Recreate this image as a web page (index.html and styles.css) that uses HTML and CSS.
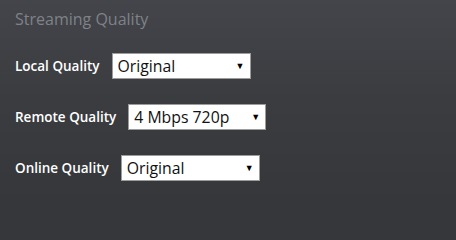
FILE: index.html
```html
<!DOCTYPE html>
<html>
<head>
<meta charset="utf-8">
<link rel="stylesheet" href="styles.css">
</head>
<body>
<div class="panel">
  <h2 class="title">Streaming Quality</h2>
  <div class="row">
    <label class="label">Local Quality</label>
    <span class="select-wrap w139">
      <select class="select"><option>Original</option></select>
      <span class="arrow">▼</span>
    </span>
  </div>
  <div class="row">
    <label class="label">Remote Quality</label>
    <span class="select-wrap w138">
      <select class="select"><option>4 Mbps 720p</option></select>
      <span class="arrow">▼</span>
    </span>
  </div>
  <div class="row">
    <label class="label">Online Quality</label>
    <span class="select-wrap w139">
      <select class="select"><option>Original</option></select>
      <span class="arrow">▼</span>
    </span>
  </div>
</div>
</body>
</html>
```
FILE: styles.css
```css
html {
  background-color: #36373a;
  background-image: linear-gradient(180deg, #43454a 0px, #3b3c40 100px, #36373a 200px);
  background-repeat: no-repeat;
  min-height: 100%;
}
body {
  margin: 0;
  padding: 0;
  font-family: "Open Sans", sans-serif;
}
.panel {
  padding: 6px 15px 0 15px;
}
.title {
  margin: 0 0 21px 0;
  font-size: 16px;
  font-weight: 400;
  color: #7f8287;
  line-height: 26px;
}
.row {
  display: flex;
  align-items: center;
  gap: 12px;
  height: 26px;
  margin-bottom: 25px;
}
.label {
  color: #ffffff;
  font-size: 13.5px;
  font-weight: 600;
}
.select-wrap {
  position: relative;
  display: inline-block;
  height: 26px;
}
.w139 { width: 139px; }
.w138 { width: 138px; }
.select {
  appearance: none;
  -webkit-appearance: none;
  width: 100%;
  height: 26px;
  box-sizing: border-box;
  border: 1px solid #9c9c9c;
  border-radius: 0;
  background: #ffffff;
  color: #111;
  font-family: "Open Sans", sans-serif;
  font-size: 15.8px;
  padding: 0 0 0 5px;
  margin: 0;
}
.arrow {
  position: absolute;
  right: 6px;
  top: 8px;
  font-size: 9px;
  color: #000;
  line-height: 10px;
  pointer-events: none;
}
```
